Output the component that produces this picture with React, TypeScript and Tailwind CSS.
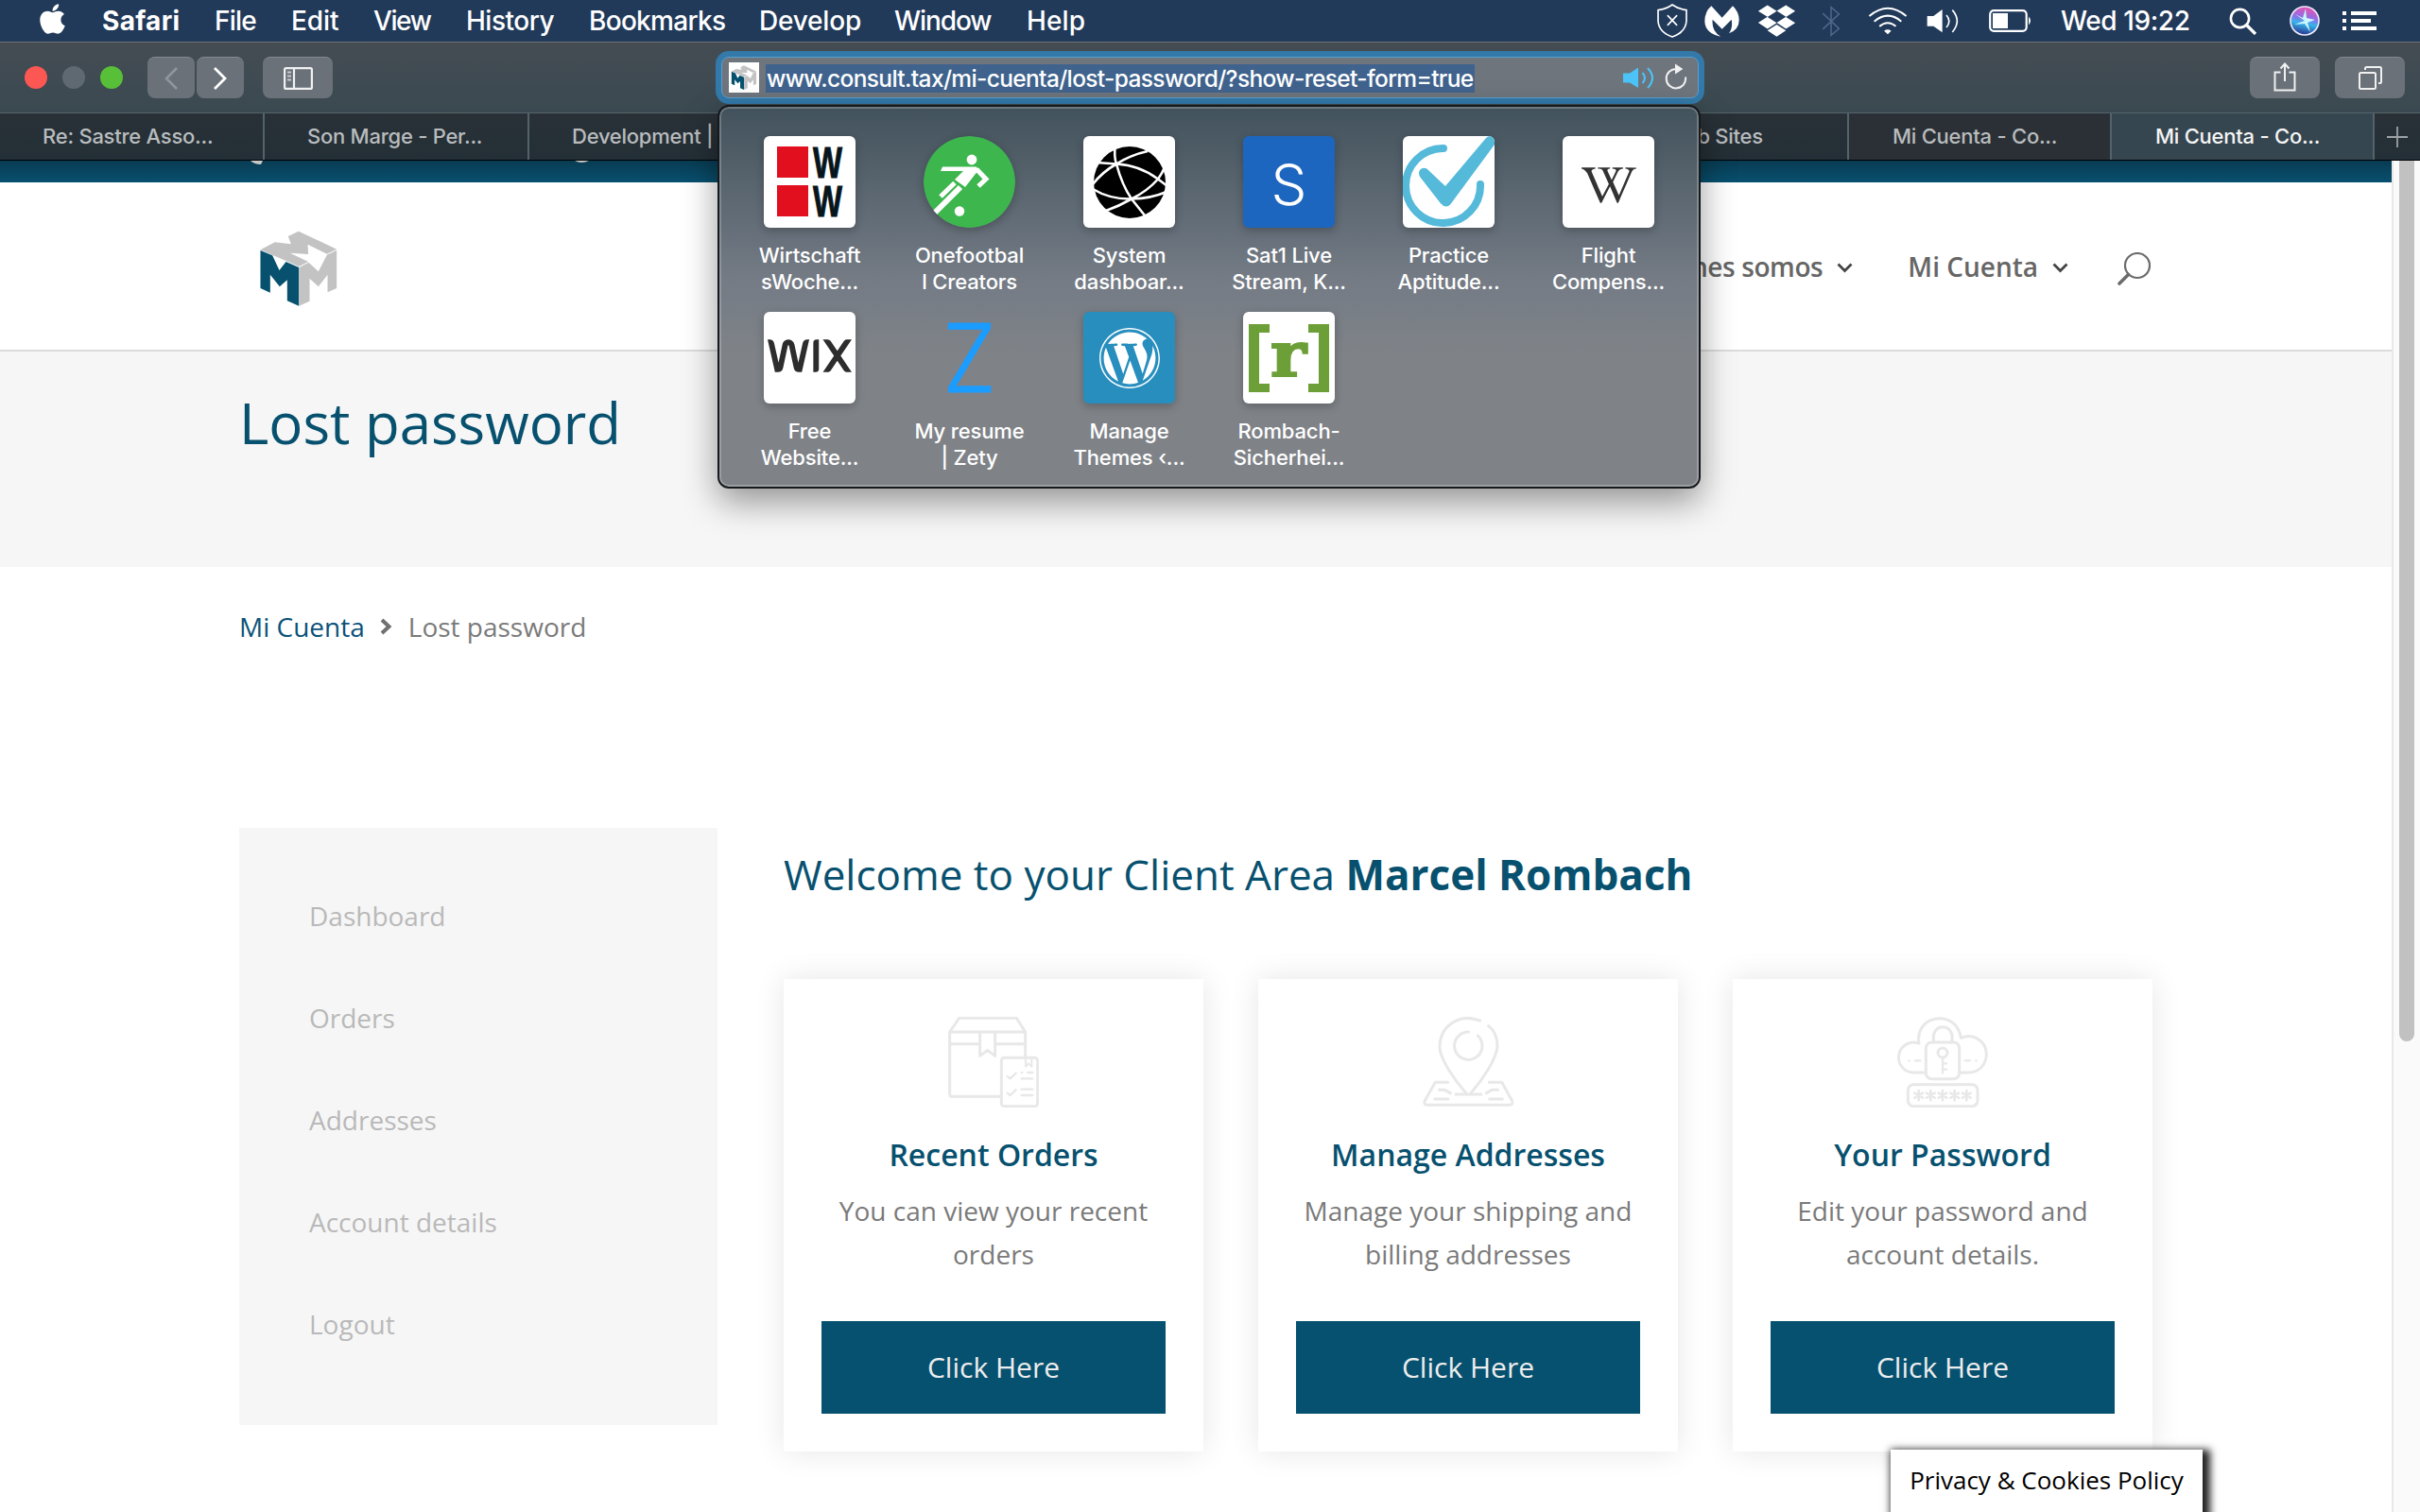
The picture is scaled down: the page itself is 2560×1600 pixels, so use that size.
import type { ReactNode } from 'react';
import { FaApple, FaDropbox, FaWikipediaW, FaWordpress } from 'react-icons/fa';
import { SiWix } from 'react-icons/si';

const menus = [
  { label: 'Safari', cls: 'w-[119px] font-bold tracking-[0.3px]' },
  { label: 'File', cls: 'w-[81px] tracking-[-0.8px]' },
  { label: 'Edit', cls: 'w-[87px] tracking-[-0.1px]' },
  { label: 'View', cls: 'w-[98px] tracking-[-1.4px]' },
  { label: 'History', cls: 'w-[130px] tracking-[-0.5px]' },
  { label: 'Bookmarks', cls: 'w-[180px] tracking-[-0.7px]' },
  { label: 'Develop', cls: 'w-[143px] tracking-[-0.2px]' },
  { label: 'Window', cls: 'w-[140px] tracking-[-1.1px]' },
  { label: 'Help', cls: 'w-[80px] tracking-[0.1px]' },
];

function MenuBar() {
  return (
    <div className="flex h-[44px] items-center bg-[#213a5a] font-['Inter',sans-serif] text-[28px] font-medium text-white">
      <FaApple className="-mt-[4px] ml-[42px] h-[36px] w-[27px]" />
      <div className="ml-[39px] flex">
        {menus.map((m) => (
          <span key={m.label} className={m.cls}>{m.label}</span>
        ))}
      </div>
      <svg className="ml-auto h-[36px] w-[32px]" viewBox="42 12 96 108" fill="none" stroke="#fff" strokeWidth="5">
        <path d="M90 15 Q108 28 135 32 V66 Q133 102 90 117 Q47 102 45 66 V32 Q72 28 90 15Z" />
        <path d="M76 50 L104 79 M104 50 L76 79" strokeLinecap="round" />
      </svg>
      <svg className="ml-[18px] h-[33px] w-[37px]" viewBox="190 16 111 99" fill="#fff">
        <path d="M212 17 Q191 35 191 66 Q193 104 242 114 Q212 98 216 60 L246 90 L276 60 Q281 86 268 104 Q301 92 300 60 Q299 35 280 17 L246 54Z" />
      </svg>
      <FaDropbox className="ml-[19px] h-[38px] w-[41px]" />
      <svg className="ml-[27px] h-[33px] w-[20px]" viewBox="562 20 58 98" fill="none" stroke="#50678a" strokeWidth="4.5">
        <path d="M565 44 L616 92 L591 113 V25 L616 46 L565 94" />
      </svg>
      <svg className="ml-[29px] h-[30px] w-[42px]" viewBox="708 18 126 92" fill="none" stroke="#fff" strokeWidth="6">
        <path d="M711 49 Q771 -2 831 49 M727 66 Q771 29 815 66 M744 82 Q771 60 797 82" />
        <path d="M759 97 Q771 88 782 97 L771 108Z" fill="#fff" stroke="none" />
      </svg>
      <svg className="ml-[20px] h-[26px] w-[34px]" viewBox="892 26 102 78" fill="none" stroke="#fff" strokeWidth="5">
        <path d="M894 50 H914 L942 29 V102 L914 82 H894Z" fill="#fff" stroke="none" />
        <path d="M955 47 Q972 66 955 86 M974 31 Q1004 66 974 101" />
      </svg>
      <svg className="ml-[32px] h-[24px] w-[46px]" viewBox="0 0 46 24">
        <rect x="1.2" y="1.2" width="38.5" height="21.6" rx="4" fill="none" stroke="#fff" strokeWidth="2.2" />
        <rect x="4" y="4" width="16" height="16" fill="#fff" />
        <path d="M42 7.5 Q46 12 42 16.5Z" fill="#fff" />
      </svg>
      <span className="ml-[30px] w-[137px] tracking-[-0.4px] whitespace-nowrap">Wed 19:22</span>
      <svg className="ml-[41px] h-[29px] w-[30px]" viewBox="0 0 30 29" fill="none" stroke="#fff" strokeWidth="2.6">
        <circle cx="11.5" cy="11.5" r="9.6" />
        <path d="M18.5 18.5 L28 28" strokeWidth="3.2" />
      </svg>
      <svg className="ml-[34px] h-[32px] w-[32px]" viewBox="0 0 32 32">
        <defs>
          <linearGradient id="siri" x1="0.6" y1="0" x2="0.4" y2="1">
            <stop offset="0" stopColor="#ee4fb0" />
            <stop offset="0.4" stopColor="#8d6fe6" />
            <stop offset="0.6" stopColor="#35b4ea" />
            <stop offset="1" stopColor="#2b2f8c" />
          </linearGradient>
        </defs>
        <circle cx="16" cy="16" r="15" fill="url(#siri)" stroke="#eef" strokeWidth="1.6" />
        <path d="M16 16 L6 9 L14 13 L17 3 L18 13 L27 15 L19 18 L22 28 L16 19 L5 20Z" fill="#c9f6ff" />
      </svg>
      <svg className="mr-[46px] ml-[24px] h-[20px] w-[36px]" viewBox="0 0 36 20" fill="#fff">
        <path d="M0 0h4v4H0zM9 0h27v4H9zM0 8h4v4H0zM9 8h21v4H9zM0 16h4v4H0zM9 16h27v4H9z" />
      </svg>
    </div>
  );
}

function Logo({ className }: { className: string }) {
  return (
    <svg className={className} viewBox="15 250 245 240">
      <path fill="#c3c3c3" d="M16 311 L62 287 L113 293 L104 268 L137 252 L258 309 L227 324 L166 294 L168 325 L110 321 L168 349 L138 364Z" />
      <path fill="#c3c3c3" d="M139 367 L169 351 L200 380 L227 327 L258 312 V433 L229 446 V390 L200 428 L172 402 V474 L139 489Z" />
      <path fill="#07516f" d="M16 313 L54 329 L76 376 L97 349 L138 367 V489 L101 473 V407 L77 428 L47 390 V447 L16 433Z" />
    </svg>
  );
}

const btn = 'flex h-[44px] items-center justify-center rounded-[8px] border-t border-[#858a8f] bg-[#6a7178]';

function Toolbar() {
  return (
    <div className="flex h-[75px] items-center border-t border-[#6b7076] bg-linear-to-b from-[#454c53] to-[#3a4951]">
      <div className="ml-[26px] flex gap-[16px]">
        <span className="size-[24px] rounded-full bg-[#fc5753]" />
        <span className="size-[24px] rounded-full bg-[#5f6971]" />
        <span className="size-[24px] rounded-full bg-[#57c038]" />
      </div>
      <div className="ml-[26px] flex gap-[2px]">
        <div className={`${btn} w-[50px]`}>
          <svg className="h-[24px] w-[14px]" viewBox="0 0 14 24" fill="none" stroke="#90969b" strokeWidth="2.6"><path d="M13 1 L2 12 L13 23" /></svg>
        </div>
        <div className={`${btn} w-[50px]`}>
          <svg className="h-[24px] w-[14px]" viewBox="0 0 14 24" fill="none" stroke="#fff" strokeWidth="2.8"><path d="M1 1 L12 12 L1 23" /></svg>
        </div>
      </div>
      <div className={`${btn} ml-[20px] w-[74px]`}>
        <svg className="h-[24px] w-[31px]" viewBox="0 0 31 24" fill="none" stroke="#f0f1f1" strokeWidth="2.2">
          <rect x="1.1" y="1.1" width="28.8" height="21.8" rx="1.5" />
          <path d="M11 1 V23" />
          <path d="M4 5.5h4M4 9.5h4M4 13.5h4" strokeWidth="1.8" stroke="#c9cccf" />
        </svg>
      </div>
      <div className="ml-[405px] h-[56px] w-[1046px] rounded-[14px] bg-[#337aaa] p-[6px]">
        <div className="flex h-[44px] items-center rounded-[8px] border border-[#5a9fce] bg-[#6e757c] pl-[7px]">
          <div className="flex size-[32px] items-center justify-center bg-white"><Logo className="h-[26px] w-[28px]" /></div>
          <span className="mt-[2px] ml-[7px] flex h-[30px] w-[750px] items-center bg-[#40638d] pl-px font-['Inter',sans-serif] text-[24.5px] font-medium tracking-[-0.64px] whitespace-nowrap text-white">
            www.consult.tax/mi-cuenta/lost-password/?show-reset-form=true
          </span>
          <svg className="ml-[157px] h-[23px] w-[33px]" viewBox="0 0 33 23" fill="none" stroke="#4cc4fa" strokeWidth="2">
            <path d="M0 6.5 H7 L16 0.5 V22 L7 16.5 H0Z" fill="#4cc4fa" stroke="none" />
            <path d="M20.5 6 Q25.5 11.5 20.5 17 M26 1 Q36 11.500 26 22" />
          </svg>
          <svg className="-mt-[2px] ml-[11px] h-[28px] w-[24px]" viewBox="0 0 24 28" fill="none" stroke="#f1f1f1" strokeWidth="2">
            <path d="M12.500 6 A10.200 10.200 0 1 0 22 14.500" />
            <path d="M11 0.500 L19.500 6 L11 11.500Z" fill="#f1f1f1" stroke="none" />
          </svg>
        </div>
      </div>
      <div className={`${btn} ml-auto w-[74px]`}>
        <svg className="-mt-[2px] h-[31px] w-[24px]" viewBox="0 0 24 31" fill="none" stroke="#f0f1f1" strokeWidth="2">
          <path d="M7.500 10.500 H1.500 V29.500 H22.500 V10.500 H16.500 M12 20 V2 M7.500 6.500 L12 1.500 L16.500 6.500" />
        </svg>
      </div>
      <div className={`${btn} mr-[16px] ml-[16px] w-[74px]`}>
        <svg className="h-[25px] w-[25px]" viewBox="0 0 25 25" fill="none" stroke="#f0f1f1" strokeWidth="2">
          <rect x="1" y="7" width="17" height="17" rx="1.500" />
          <path d="M7 4 V2.500 Q7 1 8.500 1 H22.500 Q24 1 24 2.500 V16.500 Q24 18 22.500 18 H21" />
        </svg>
      </div>
    </div>
  );
}

const tabs = [
  { label: 'Re: Sastre Asso...', cls: 'w-[280px] pl-[45px]' },
  { label: 'Son Marge - Per...', cls: 'w-[280px] pl-[45px]' },
  { label: 'Development |', cls: 'w-[279px] pl-[45px]' },
  { label: '', cls: 'w-[279px]' },
  { label: '', cls: 'w-[279px]' },
  { label: '', cls: 'w-[279px]' },
  { label: 'Web Sites', cls: 'w-[280px] pl-[86px]' },
  { label: 'Mi Cuenta - Co...', cls: 'w-[278px] pl-[46px] bg-[#2a3035]' },
  { label: 'Mi Cuenta - Co...', cls: 'w-[278px] pl-[46px] bg-[#354650] text-[#f5f5f5]' },
];

function TabBar() {
  return (
    <div className="flex h-[51px] border-t border-b border-t-[#55636b] border-b-black bg-linear-to-b from-[#293137] to-[#232f36] font-['Inter',sans-serif] text-[22px] tracking-[-0.25px] text-[#b9bcbe]">
      {tabs.map((t, i) => (
        <div key={i} className={`flex items-center border-r-2 border-[#53626b] font-medium whitespace-nowrap ${t.cls}`}>{t.label}</div>
      ))}
      <div className="flex flex-1 items-center justify-center">
        <svg className="h-[22px] w-[22px]" viewBox="0 0 22 22" stroke="#9da3a7" strokeWidth="1.800"><path d="M11 0V22M0 11H22" /></svg>
      </div>
    </div>
  );
}

const tile = 'flex size-[97px] shrink-0 items-center justify-center overflow-hidden rounded-[6px] shadow-[0_3px_10px_rgba(0,0,0,0.25)]';

const favorites: { lines: [string, string]; icon: ReactNode }[] = [
  {
    lines: ['Wirtschaft', 'sWoche...'],
    icon: (
      <div className={`${tile} bg-white`}>
        <svg className="size-[97px]" viewBox="0 0 97 97">
          <path fill="#e20f1e" d="M14 11h33v33H14zM14 52h33v33H14z" />
          <g fill="#07151c" fontFamily="Liberation Sans" fontWeight="700" fontSize="47" stroke="#07151c">
            <text x="52" y="44" textLength="31" lengthAdjust="spacingAndGlyphs">W</text>
            <text x="52" y="85" textLength="31" lengthAdjust="spacingAndGlyphs">W</text>
          </g>
        </svg>
      </div>
    ),
  },
  {
    lines: ['Onefootbal', 'l Creators'],
    icon: (
      <svg className="size-[97px] shrink-0 rounded-full shadow-[0_3px_10px_rgba(0,0,0,0.25)]" viewBox="0 0 97 97" stroke="#fff" fill="none">
        <circle cx="48.500" cy="48.500" r="48.500" fill="#3db64e" stroke="none" />
        <circle cx="51" cy="25" r="5.400" fill="#fff" stroke="none" />
        <path d="M20 32.500 H56 L58 36 L44 54 L33 46 L42 37 H18Z" fill="#fff" stroke="none" />
        <path d="M56 35 L66 45.500 L58 53" strokeWidth="5" />
        <path d="M33 49.500 L18 64" strokeWidth="5" />
        <path d="M39 54 L12 81" strokeWidth="6" />
        <circle cx="38" cy="79.500" r="5.200" fill="#fff" stroke="none" />
      </svg>
    ),
  },
  {
    lines: ['System', 'dashboar...'],
    icon: (
      <div className={`${tile} bg-white`}>
        <svg className="size-[97px]" viewBox="0 0 97 97" stroke="#fff" strokeWidth="2.600" fill="none">
          <circle cx="49" cy="49" r="38" fill="#000" stroke="none" />
          <path d="M10 51 Q20 38 35 29.500 Q50 20 68 16 M35 30 Q32 20 34 10 M35 29.500 L14 28 M35 29.500 Q60 31 79 45.500 L89 53 M79 45.500 Q83 40 86 33 M79 45.500 Q68 58 51 66.500 Q38 74 24 79 M35 29.500 Q41 52 51 66.500 L65 84 M10 56 Q28 67 51 66.500 Q72 66 88 59" />
        </svg>
      </div>
    ),
  },
  { lines: ['Sat1 Live', 'Stream, K...'], icon: <div className={`${tile} bg-[#1c66bf] pt-1 text-[60px] leading-none font-light text-white`}>S</div> },
  {
    lines: ['Practice', 'Aptitude...'],
    icon: (
      <div className={`${tile} bg-white`}>
        <svg className="size-[97px]" viewBox="0 0 97 97">
          <path d="M43 13 A39.500 39.500 0 1 0 82 51" fill="none" stroke="#55b9da" strokeWidth="8" strokeLinecap="round" />
          <path d="M18 43 Q15 36 21 34 Q25 33 28 37 L45 53 L88 2 Q92 -2 97 2 V9 L52 70 Q46 79 39 70Z" fill="#55b9da" />
        </svg>
      </div>
    ),
  },
  { lines: ['Flight', 'Compens...'], icon: <div className={`${tile} bg-white pt-[6px]`}><FaWikipediaW className="h-[48px] w-[58px] text-[#333]" /></div> },
  { lines: ['Free', 'Website...'], icon: <div className={`${tile} bg-white pb-[5px]`}><SiWix className="size-[89px] text-[#2d2d2d]" /></div> },
  {
    lines: ['My resume', '| Zety'],
    icon: (
      <div className="flex size-[97px] shrink-0 items-center justify-center text-[101px] leading-none font-light text-[#1b9cff] [-webkit-text-stroke:1px_#1b9cff]">
        <span className="scale-x-90">Z</span>
      </div>
    ),
  },
  { lines: ['Manage', 'Themes ‹...'], icon: <div className={`${tile} bg-[#278ebe] text-white`}><FaWordpress className="size-[66px]" /></div> },
  {
    lines: ['Rombach-', 'Sicherhei...'],
    icon: (
      <div className={`${tile} bg-white`}>
        <svg className="size-[97px]" viewBox="0 0 97 97" fill="#6d9f38">
          <path d="M6 13h22v9H17v54h11v9H6zM91 13H69v9h11v54H69v9h22z" />
          <text x="29" y="68" fontFamily="DejaVu Serif" fontWeight="700" fontSize="66" textLength="38" lengthAdjust="spacingAndGlyphs" stroke="#6d9f38" strokeWidth="2">r</text>
        </svg>
      </div>
    ),
  },
];

function FavoritesPopup() {
  return (
    <div className="absolute top-[111px] left-[759px] h-[406px] w-[1040px] rounded-[12px] border-2 border-[#16191c] bg-linear-to-b from-[#42525c] via-[#747b85] via-45% to-[#7f8388] to-65% font-['Inter',sans-serif] shadow-[0_14px_36px_rgba(0,0,0,0.4),inset_0_0_0_2px_rgba(255,255,255,0.22)]">
      <div className="grid grid-cols-[repeat(6,169px)] gap-y-[18px] pt-[31px] pl-[11px]">
        {favorites.map((f) => (
          <div key={f.lines[0]} className="flex h-[168px] flex-col items-center">
            {f.icon}
            <div className="mt-[15px] text-center text-[22px] leading-[28px] font-medium tracking-[-0.15px] whitespace-nowrap text-white">
              {f.lines[0]}
              <br />
              {f.lines[1]}
            </div>
          </div>
        ))}
      </div>
    </div>
  );
}

function Chevron() {
  return (
    <svg className="mt-[4px] ml-[15px] h-[11px] w-[17px]" viewBox="0 0 17 11" fill="none" stroke="#444" strokeWidth="2.800"><path d="M1.500 1.500 L8.500 8.500 L15.500 1.500" /></svg>
  );
}

const cards = [
  {
    title: 'Recent Orders',
    text: ['You can view your recent', 'orders'],
    icon: (
      <svg className="size-[96px]" viewBox="69 78 288 288" fill="none" stroke="#e8e8e8" strokeWidth="9" strokeLinejoin="round" strokeLinecap="round">
        <path d="M236 331 H82 Q74 331 74 323 V126 L104 82 H286 L314 126 V206" />
        <path d="M74 126 H314 M74 164 H168 M220 164 H314 M170 128 V202 L194 184 L218 202 V128" />
        <rect x="238" y="208" width="115" height="154" rx="9" />
        <path d="M315 210 V236 L324 226 L334 236 V210" strokeWidth="6" />
        <path d="M257 267 L266 274 L284 257 M257 320 L266 327 L284 310 M302 274 H337 M302 308 H337 M302 327 H337 M303 255 H304 M322 255 H337" strokeWidth="7" />
      </svg>
    ),
  },
  {
    title: 'Manage Addresses',
    text: ['Manage your shipping and', 'billing addresses'],
    icon: (
      <svg className="size-[96px]" viewBox="72 78 288 288" fill="none" stroke="#e8e8e8" strokeWidth="9" strokeLinejoin="round" strokeLinecap="round">
        <path d="M254 90 C185 64 125 110 126 175 C128 215 175 280 208 319 M281 107 C303 124 309 148 309 172 C305 215 260 280 226 319" />
        <path d="M218 126 A44 44 0 1 0 247 138" />
        <path d="M152 286 H112 L78 346 Q76 358 86 358 H348 Q360 356 356 345 L323 286 H283 M177 324 H257 M124 310 H142 L160 320 M311 310 H291 L274 320 M110 339 H153 M284 339 H325" />
      </svg>
    ),
  },
  {
    title: 'Your Password',
    text: ['Edit your password and', 'account details.'],
    icon: (
      <svg className="size-[96px]" viewBox="81 78 288 288" fill="none" stroke="#e8e8e8" strokeWidth="9" strokeLinejoin="round" strokeLinecap="round">
        <path d="M170 255 H134 A48 48 0 1 1 150 162 C142 115 175 83 215 83 C252 83 278 108 283 145 C325 127 365 158 364 198 C363 232 338 255 308 255 H280" />
        <rect x="172" y="159" width="106" height="116" rx="18" />
        <path d="M196 158 V140 A29 29 0 0 1 255 140 V158" />
        <circle cx="225" cy="192" r="15" />
        <path d="M225 207 V256 M225 226 H237 M225 245 H237 M118 217 H119 M138 217 H154 M296 217 H312 M331 217 H332" strokeWidth="7" />
        <rect x="115" y="293" width="221" height="69" rx="18" />
        {[149, 187, 225, 263, 301].map((x) => (
          <path key={x} strokeWidth="8" d={`M${x} 312 V343 M${x - 13} 320 L${x + 13} 335 M${x + 13} 320 L${x - 13} 335`} />
        ))}
      </svg>
    ),
  },
];

export default function App() {
  return (
    <div className="relative flex h-[1600px] w-[2560px] flex-col overflow-hidden bg-white font-['Open_Sans',sans-serif]">
      <MenuBar />
      <Toolbar />
      <TabBar />
      <div className="flex min-h-0 flex-1">
        <div className="flex w-[2530px] flex-col">
          <div className="flex h-[23px] items-start bg-linear-to-b from-[#083c53] to-[#08506f] pl-[265px]">
            <svg className="h-[6px] w-[360px]" viewBox="0 0 360 6" fill="#c8c8c8">
              <path d="M0 0 H13 L11 4 Q4 4 0 0ZM343 0 H358 Q350 4 343 0Z" />
            </svg>
          </div>
          <header className="flex h-[179px] items-center justify-between border-b-2 border-[#dcdcdc] pr-[254px] pl-[275px]">
            <Logo className="mt-[4px] h-[80px] w-[82px]" />
            <nav className="flex items-center text-[28px] font-semibold text-[#666]">
              <span className="tracking-[-0.4px]">Quienes somos</span>
              <Chevron />
              <span className="ml-[58px]">Mi Cuenta</span>
              <Chevron />
              <svg className="mt-[6px] ml-[52px] h-[35px] w-[36px]" viewBox="0 0 36 35" fill="none" stroke="#6b6b6b" strokeWidth="2.200">
                <circle cx="21" cy="14" r="13" />
                <path d="M11.500 23.500 L2 33" strokeWidth="3.600" strokeLinecap="round" />
              </svg>
            </nav>
          </header>
          <section className="h-[228px] bg-[#f6f6f6] pt-[45px] pl-[253px]">
            <h1 className="text-[60px] leading-[60px] text-[#07516f]">Lost password</h1>
          </section>
          <div className="mt-[43px] flex h-[40px] items-center pl-[253px] text-[28px] leading-[40px]">
            <span className="text-[#0b527a]">Mi Cuenta</span>
            <svg className="mr-[17px] ml-[16px] h-[18px] w-[13px]" viewBox="0 0 13 18" fill="none" stroke="#707070" strokeWidth="4"><path d="M2 2 L9.500 9 L2 16" /></svg>
            <span className="text-[#7a7a7a]">Lost password</span>
          </div>
          <div className="mt-[193px] flex pl-[253px]">
            <aside className="h-[632px] w-[506px] bg-[#f6f6f6] pt-[39px] pl-[74px] text-[28px] text-[#b9b9b9]">
              {['Dashboard', 'Orders', 'Addresses', 'Account details', 'Logout'].map((x) => (
                <div key={x} className="h-[108px] leading-[108px]">{x}</div>
              ))}
            </aside>
            <main className="ml-[70px] pt-[19px]">
              <h2 className="text-[44px] leading-[60px] text-[#07516f]">
                Welcome to your Client Area <b className="font-bold">Marcel Rombach</b>
              </h2>
              <div className="mt-[81px] flex gap-[58px]">
                {cards.map((c) => (
                  <div key={c.title} className="flex h-[500px] w-[444px] flex-col items-center bg-white px-[40px] pt-[40px] text-center shadow-[0_0_30px_rgba(0,0,0,0.1)]">
                    {c.icon}
                    <h3 className="mt-[30px] text-[32px] leading-[40px] font-semibold text-[#07516f]">{c.title}</h3>
                    <p className="mt-[16px] text-[28px] leading-[46px] whitespace-nowrap text-[#7a7a7a]">
                      {c.text[0]}
                      <br />
                      {c.text[1]}
                    </p>
                    <button className="mt-[48px] h-[98px] w-[364px] bg-[#075170] pb-[2px] text-[30px] text-[#ededed]">Click Here</button>
                  </div>
                ))}
              </div>
            </main>
          </div>
        </div>
        <div className="flex-1 border-l-2 border-[#e8e8e8] bg-[#fafafa] pl-[6px]">
          <div className="h-[932px] w-[16px] rounded-b-full bg-[#c1c1c1]" />
        </div>
      </div>
      <FavoritesPopup />
      <div className="absolute top-[1534px] left-[2000px] h-[80px] w-[330px] bg-white text-center text-[26px] leading-[64px] text-black shadow-[4px_4px_8px_4px_#222]">
        Privacy &amp; Cookies Policy
      </div>
    </div>
  );
}
